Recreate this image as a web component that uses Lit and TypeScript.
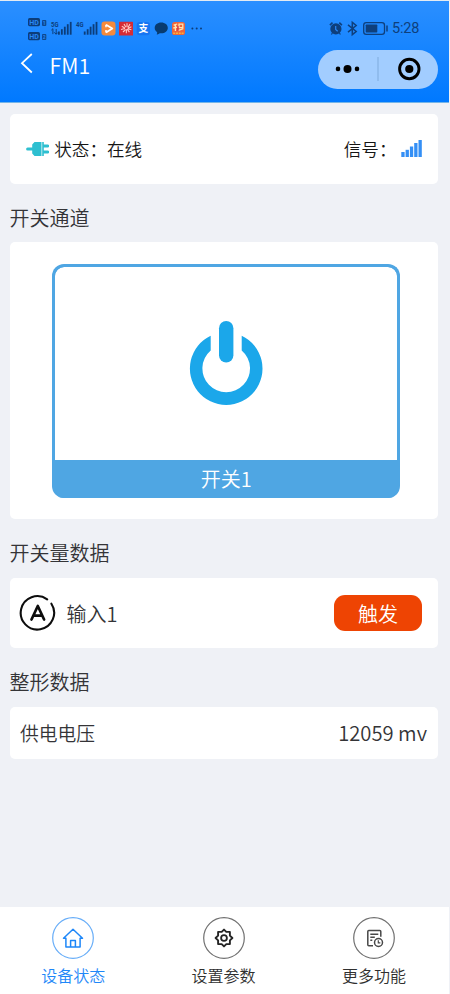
import { LitElement, html, svg, css } from "lit";
import { customElement } from "lit/decorators.js";

const bars = (x: number, y: number, hs: number[], step: number, w: number) =>
  hs.map((h, i) => svg`<rect x=${x + i * step} y=${y - h} width=${w} height=${h}></rect>`);

@customElement("status-bar")
class StatusBar extends LitElement {
  static styles = css`
    :host { display: flex; justify-content: space-between; align-items: flex-start; height: 31px; padding: 13px 29px 0 26px; box-sizing: content-box; }
    .right { display: flex; align-items: center; height: 31px; color: #0e3f7c; }
    svg { display: block; }
    text { font-family: Roboto, "Noto Sans CJK SC", sans-serif; font-weight: 700; }
    .cjk { font-family: "Noto Sans CJK SC", sans-serif; }
    .time { font: 14.5px/32px Roboto, sans-serif; margin-left: 4px; width: 28px; white-space: nowrap; letter-spacing: -0.15px; }
  `;
  render() {
    return html`
      <svg width="180" height="31" viewBox="26 13 180 31">
        <g fill="#0c3d79">
          <rect x="28" y="18" width="12" height="8.2" rx="1.6"></rect>
          <rect x="28" y="32" width="12" height="8.2" rx="1.6"></rect>
          <rect x="42" y="20" width="4.3" height="6" rx="1" opacity=".85"></rect>
          <rect x="42" y="34" width="4.3" height="6" rx="1" opacity=".85"></rect>
          <text x="51" y="27" font-size="7.4" textLength="7.5" lengthAdjust="spacingAndGlyphs">5G</text>
          <text x="76" y="27" font-size="7.4" textLength="7.5" lengthAdjust="spacingAndGlyphs">4G</text>
          <path d="M51.3 30.2l1.6-1.5v5.4M56.2 29v5.2l-2-1.8M56.2 34.2l1.5-1.6" fill="none" stroke="#0c3d79" stroke-width="1"></path>
          ${bars(58, 34.7, [3.2, 5.5, 8, 10.5, 12.8], 2.95, 1.8)}
          ${bars(83.8, 34.7, [3.2, 5.5, 8, 10.5, 12.8], 2.95, 1.8)}
        </g>
        <g fill="#2888f6">
          <text x="29.2" y="25" font-size="8" textLength="9.6" lengthAdjust="spacingAndGlyphs">HD</text>
          <text x="29.2" y="39" font-size="8" textLength="9.6" lengthAdjust="spacingAndGlyphs">HD</text>
          <text x="42.8" y="25" font-size="5">1</text>
          <text x="42.7" y="39" font-size="5">2</text>
        </g>
        <rect x="101.5" y="21.5" width="14" height="14" rx="3.2" fill="#f58a3c"></rect>
        <path d="M106 24.7l6.3 3.8-6.3 4" fill="none" stroke="#fff" stroke-width="1.8" stroke-linejoin="round"></path>
        <path d="M106 24.7v2.6M106 30v2.4" stroke="#fff" stroke-width="1.5"></path>
        <rect x="119" y="21.7" width="14" height="13.8" rx=".6" fill="#d52c35"></rect>
        <g fill="none" stroke="#ffc9c4" stroke-width="1.1">
          <path d="M121 29.5l4-1M121.8 26.2l3 1.8M124 24l1.8 3.2M127 23.2v4M130 24l-2 3.5M131.4 26.8l-3.5 1.6M131.4 29.8l-3.8-1M129.4 32.2l-2.2-3M126.3 33.3l.2-4M123 32l2.6-2.5"></path>
        </g>
        <rect x="136.7" y="22" width="13.3" height="13.3" rx="3" fill="#1675f2"></rect>
        <text class="cjk" x="138.6" y="32" font-size="9.8" fill="#fff">支</text>
        <path d="M161.2 22.6c3.9 0 6.6 2.3 6.6 5.3s-2.8 5.3-6.6 5.3c-.8 0-1.5-.1-2.2.5-.9.8-2.2.8-2.4.6.7-.6.7-1.5.4-2.2-1.4-1-2.3-2.5-2.3-4.2 0-3 2.7-5.3 6.5-5.3z" fill="#083b70"></path>
        <rect x="172" y="22" width="13" height="13" rx="2.6" fill="#ed663c"></rect>
        <path d="M173.6 25.2l3.6-1.2M175.4 24.5v6.5M173.3 28l4-.8M179 24.2h3.8v3.4H179zM178 30.3c2-.2 4-1.6 5.3-1.3" fill="none" stroke="#ffe5b3" stroke-width="1.3"></path>
        <path d="M173.2 33.2h10.6" stroke="#f9b33a" stroke-width="1.5" stroke-dasharray="2 .8"></path>
        <path d="M178 26v5" stroke="#c21d50" stroke-width="1"></path>
        <g fill="#0c3d79"><circle cx="192.4" cy="28.5" r="1"></circle><circle cx="196.7" cy="28.5" r="1"></circle><circle cx="201" cy="28.5" r="1"></circle></g>
      </svg>
      <div class="right">
        <svg width="60" height="31" viewBox="328 13 60 31">
          <g fill="none" stroke="#0e3f7c">
            <circle cx="335.9" cy="28.9" r="5.6" fill="#0e3f7c" stroke="none"></circle>
            <path d="M329.9 25.2l2.6-2.5M341.9 25.2l-2.6-2.5" stroke-width="1.6"></path>
            <path d="M332.4 33l-1 1.5M339.4 33l1 1.5" stroke-width="1.2"></path>
            <path d="M335.7 26v3.4l2 1.8" stroke="#2a87f5" stroke-width="1.2"></path>
            <path d="M348 24.8l8.2 6.7-3.9 3.2v-12.4l3.9 3.2L348 32.2" stroke-width="1.5"></path>
            <rect x="363.7" y="22.6" width="20.8" height="11.8" rx="2.6" stroke-width="1.3"></rect>
            <rect x="365.7" y="24.6" width="11.6" height="7.8" rx=".7" fill="#0e3f7c" stroke="none"></rect>
            <path d="M387 25.5v6" stroke-width="1.5"></path>
          </g>
        </svg>
        <span class="time">5:28</span>
      </div>`;
  }
}

@customElement("nav-header")
class NavHeader extends LitElement {
  static styles = css`
    :host { display: flex; align-items: flex-start; height: 57px; padding: 0 11px 0 20px; box-sizing: border-box; }
    svg { display: block; }
    .back { margin-top: 9px; }
    .title { margin: 5px auto 0 15.5px; font-size: 21.4px; line-height: 31px; color: #fff; }
    .capsule { display: flex; align-items: center; width: 120px; height: 39.5px; margin-top: 5.5px; border-radius: 20px; background: #a2cdff; }
  `;
  render() {
    return html`
      <svg class="back" width="14" height="22" viewBox="0 0 14 22"><path d="M11.8 1L2 10.2l9.8 9.3" fill="none" stroke="#fff" stroke-width="1.8"></path></svg>
      <div class="title">FM1</div>
      <div class="capsule">
        <svg width="120" height="40" viewBox="0 0 120 40">
          <circle cx="20" cy="19.9" r="2.3"></circle><circle cx="29.5" cy="19.9" r="4"></circle><circle cx="39" cy="19.9" r="2.3"></circle>
          <path d="M60 8v24" stroke="#7eabdd" stroke-width="1"></path>
          <circle cx="91.3" cy="20" r="9.7" fill="none" stroke="#000" stroke-width="2.9"></circle>
          <circle cx="91.3" cy="20" r="4.1"></circle>
        </svg>
      </div>`;
  }
}

@customElement("tab-bar")
class TabBar extends LitElement {
  static styles = css`
    :host { display: flex; height: 87px; background: #fff; box-sizing: border-box; padding: 10px 0 0; }
    .tab { flex: none; display: flex; flex-direction: column; align-items: center; color: #303030; }
    .tab:first-child { width: 146.6px; }
    .tab:nth-child(2) { width: 154px; }
    .tab:nth-child(3) { width: 147px; }
    .tab.active { color: #1e87f8; }
    .label { font-size: 16px; line-height: 24px; margin-top: 4px; }
    svg { display: block; }
  `;
  render() {
    return html`
      <div class="tab active">
        <svg width="42" height="42" viewBox="0 0 42 42" fill="none" stroke="#1e87f8">
          <circle cx="21" cy="21" r="20.3" stroke="#67adf8" stroke-width="1.2"></circle>
          <path d="M11.5 21.2L21 12.3l9.5 8.900h-2.4v8.7H13.9v-8.7zM18.6 29.900v-6.3h4.8v6.3" stroke-width="1.5" stroke-linejoin="round"></path>
        </svg><span class="label">设备状态</span>
      </div>
      <div class="tab">
        <svg width="42" height="42" viewBox="0 0 42 42" fill="none" stroke="#252525">
          <circle cx="21" cy="21" r="20.3" stroke="#707070" stroke-width="1.2"></circle>
          <path d="M21 12.6l2.3 2.3h3.6v3.7l2.5 2.4-2.5 2.4v3.7h-3.6L21 29.4l-2.3-2.3h-3.6v-3.7L12.6 21l2.5-2.4v-3.7h3.6z" stroke-width="1.9" stroke-linejoin="round"></path>
          <circle cx="21" cy="21" r="2.9" stroke-width="1.8"></circle>
        </svg><span class="label">设置参数</span>
      </div>
      <div class="tab">
        <svg width="42" height="42" viewBox="0 0 42 42" fill="none" stroke="#484848">
          <circle cx="21" cy="21" r="20.3" stroke="#707070" stroke-width="1.2"></circle>
          <path d="M20 28.7h-4.2a1 1 0 0 1-1-1V14.5a1 1 0 0 1 1-1h11a1 1 0 0 1 1 1v5.2M17.3 17.3h8M17.3 20.3h4.5M17.3 23.3h2" stroke-width="1.5"></path>
          <circle cx="25.5" cy="25.5" r="4" stroke-width="1.5"></circle>
          <path d="M25.3 23.3v2.5h2" stroke-width="1.2"></path>
        </svg><span class="label">更多功能</span>
      </div>`;
  }
}

@customElement("app-root")
class AppRoot extends LitElement {
  static styles = css`
    :host { display: flex; flex-direction: column; height: 994px; width: 450px; box-sizing: border-box; background: #eff1f6; border-top: 1px solid #e4ebf2; font-family: "Noto Sans CJK SC", sans-serif; font-weight: 350; color: #343437; overflow: hidden; }
    .top { height: 101px; margin-right: 1px; background: linear-gradient(#2b8fff, #0079ff); background-clip: padding-box; flex: none; border-bottom: 1px solid #74b5e8; box-sizing: content-box; }
    .top status-bar { padding-top: 12px; }
    main { flex: 1; padding: 11px 12px 0 9.5px; }
    .card { background: #fff; border-radius: 5px; box-sizing: border-box; display: flex; align-items: center; }
    h2 { margin: 0; font-size: 20px; font-weight: 350; line-height: 30px; }
    .status { height: 69.5px; padding: 0 16px; font-size: 17.6px; color: #151515; margin-bottom: 19px; }
    .status svg { display: block; flex: none; }
    .status .plug { margin-right: 5.2px; }
    .status .signal { margin-left: auto; }
    .channel { height: 277px; margin: 9.5px 0 18.5px; justify-content: center; padding-left: 5px; }
    .switch { width: 348px; height: 234px; box-sizing: border-box; border: 3px solid #4fa6e3; border-bottom: 0; border-radius: 12px; overflow: hidden; display: flex; flex-direction: column; background: #4fa6e3; }
    .face { flex: 1; display: flex; justify-content: center; align-items: center; background: #fff; border-radius: 9px 9px 0 0; }
    .name { height: 38px; background: #4fa6e3; color: #fff; font-size: 20px; line-height: 37px; text-align: center; }
    .input { height: 70.5px; margin: 10px 0 19px; padding: 0 16px 0 9.5px; font-size: 20px; }
    .input svg { margin-right: 10.5px; }
    .input span { padding-top: 1px; box-sizing: border-box; }
    .input .tag { margin-left: auto; width: 88px; height: 36px; line-height: 36px; border-radius: 11px; background: #ee4403; color: #fff; text-align: center; }
    .volt { height: 51.5px; margin-top: 10px; padding: 0 11px 0 10.5px; justify-content: space-between; font-size: 18.8px; }
    .volt .value { font-size: 20.2px; }
    tab-bar { margin-right: 1px; flex: none; }
  `;
  render() {
    return html`
      <div class="top"><status-bar></status-bar><nav-header></nav-header></div>
      <main>
        <section class="card status">
          <svg class="plug" width="23.5" height="16" viewBox="0 0 23.5 16" fill="#2ebfd0">
            <path d="M1.6 6.5h4.6V3.5L8.5 1h7v14h-7l-2.3-2.5v-3H1.6a1.5 1.5 0 0 1 0-3z"></path>
            <path d="M16.2 1h1.6v2.5h4a1.45 1.45 0 0 1 0 2.9h-4v3.2h4a1.45 1.45 0 0 1 0 2.9h-4V15h-1.6z"></path>
          </svg>
          <span>状态：在线</span>
          <span class="signal">信号：</span>
          <svg width="25.5" height="18" viewBox="0 0 25.5 18" fill="#348ff5">${bars(4.3, 17, [5, 7.2, 10.5, 14, 17], 4.3, 3.3)}</svg>
        </section>
        <h2>开关通道</h2>
        <section class="card channel">
          <div class="switch">
            <div class="face">
              <svg width="74" height="86" viewBox="0 0 74 86" fill="#1ba7ea">
                <path d="M21.7 15.8A36.3 36.3 0 1 0 52.7 15.8V30.4A23.8 23.8 0 1 1 21.7 30.4Z"></path>
                <rect x="30" y="1" width="14.4" height="41.5" rx="7.2"></rect>
              </svg>
            </div>
            <div class="name">开关1</div>
          </div>
        </section>
        <h2>开关量数据</h2>
        <section class="card input">
          <svg width="37" height="37" viewBox="0 0 37 37" fill="none" stroke="#0d0d0d" stroke-linecap="round">
            <path d="M28.2 5.3A16.7 16.7 0 1 0 32.4 9.7" stroke-width="2.1"></path>
            <path d="M12.5 25.5L18.8 12l6.300 13.5M14.600 21.600h8.400" stroke-width="2.700" stroke-linejoin="round"></path>
          </svg>
          <span>输入1</span>
          <span class="tag">触发</span>
        </section>
        <h2>整形数据</h2>
        <section class="card volt"><span>供电电压</span><span class="value">12059 mv</span></section>
      </main>
      <tab-bar></tab-bar>`;
  }
}
